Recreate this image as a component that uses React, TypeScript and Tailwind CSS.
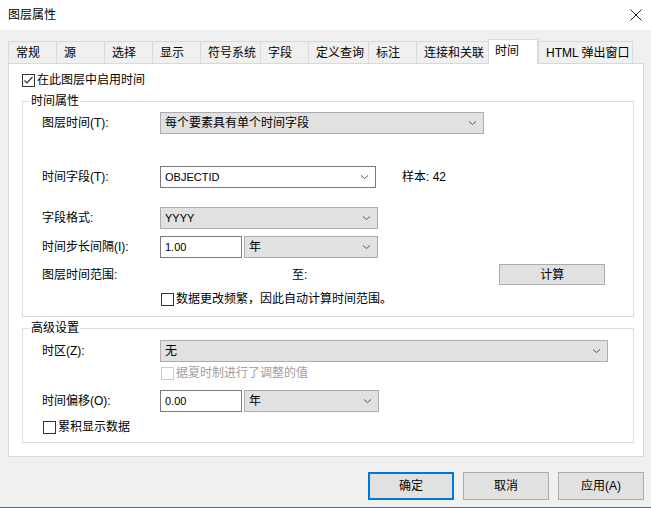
import React from "react";

const FONT = "font-['Liberation_Sans','Noto_Sans_CJK_SC',sans-serif]";

function Chevron() {
  return (
    <svg width="9" height="6" viewBox="0 0 9 6" className="shrink-0">
      <path d="M1 1.5 L4.5 4.5 L8 1.5" fill="none" stroke="#555" strokeWidth="1" />
    </svg>
  );
}

function Select({ value, w, white, small }: { value: string; w: string; white?: boolean; small?: boolean }) {
  return (
    <div
      className={`${w} h-[22px] flex items-center justify-between pl-[4px] pr-[6px] border ${
        white ? "bg-white border-[#7a7a7a]" : "bg-[#e1e1e1] border-[#adadad]"
      }`}
    >
      <span className={small ? "text-[11px] leading-[14px]" : "text-[12px] leading-[16px]"}>{value}</span>
      <Chevron />
    </div>
  );
}

function Input({ value }: { value: string }) {
  return (
    <div className="w-[82px] h-[22px] flex items-center pl-[4px] bg-white border border-[#7a7a7a] text-[11px] leading-[14px]">
      {value}
    </div>
  );
}

function Checkbox({ checked, disabled }: { checked?: boolean; disabled?: boolean }) {
  return (
    <div
      className={`w-[13px] h-[13px] border bg-white flex items-center justify-center shrink-0 ${
        disabled ? "border-[#cccccc]" : "border-[#333333]"
      }`}
    >
      {checked && (
        <svg width="11" height="11" viewBox="0 0 11 11">
          <path d="M1.5 5.5 L4 8 L9.5 2" fill="none" stroke="#333" strokeWidth="1.2" />
        </svg>
      )}
    </div>
  );
}

function Tab({ label, w, selected, last }: { label: string; w: string; selected?: boolean; last?: boolean }) {
  if (selected) {
    return (
      <div
        className={`${w} h-[25px] -mb-[1px] relative z-10 bg-white border-t border-l border-r border-[#d9d9d9] flex items-start pl-[6px] pt-[3px] text-[12px] leading-[16px]`}
      >
        {label}
      </div>
    );
  }
  return (
    <div
      className={`${w} h-[22px] bg-[#f0f0f0] border-t border-l ${last ? "border-r" : ""} border-[#d9d9d9] flex items-center pl-[7px] text-[12px] leading-[16px]`}
    >
      {label}
    </div>
  );
}

function Label({ children }: { children: React.ReactNode }) {
  return <div className="w-[118px] shrink-0 text-[12px] leading-[16px]">{children}</div>;
}

function Group({ title, h, children, className }: { title: string; h: string; children: React.ReactNode; className?: string }) {
  return (
    <div className={`relative ${h} border border-[#dcdcdc] ${className ?? ""}`}>
      <div className="absolute left-[7px] -top-[9px] bg-white px-[1px] text-[12px] leading-[16px]">{title}</div>
      {children}
    </div>
  );
}

function Button({ label, def }: { label: string; def?: boolean }) {
  return (
    <div
      className={`w-[86px] h-[28px] flex items-center justify-center bg-[#e1e1e1] text-[12px] leading-[16px] ${
        def ? "border-2 border-[#0078d7]" : "border border-[#adadad]"
      }`}
    >
      {label}
    </div>
  );
}

export default function App() {
  return (
    <div className={`w-[651px] h-[508px] bg-[#f0f0f0] flex flex-col text-[#000] ${FONT}`}>
      {/* Title bar */}
      <div className="h-[30px] bg-white flex items-center justify-between pl-[8px] pr-[9px] shrink-0">
        <span className="text-[12px] leading-[16px]">图层属性</span>
        <svg width="12" height="12" viewBox="0 0 12 12">
          <path d="M0.5 0.5 L11.5 11.5 M11.5 0.5 L0.5 11.5" stroke="#222" strokeWidth="1" />
        </svg>
      </div>

      <div className="px-[8px] pt-[9px] shrink-0">
        {/* Tabs */}
        <div className="h-[24px] flex items-end">
          <Tab label="常规" w="w-[48px]" />
          <Tab label="源" w="w-[48px]" />
          <Tab label="选择" w="w-[48px]" />
          <Tab label="显示" w="w-[48px]" />
          <Tab label="符号系统" w="w-[60px]" />
          <Tab label="字段" w="w-[48px]" />
          <Tab label="定义查询" w="w-[60px]" />
          <Tab label="标注" w="w-[48px]" />
          <Tab label="连接和关联" w="w-[72px]" />
          <Tab label="时间" w="w-[50px]" selected />
          <Tab label="HTML 弹出窗口" w="w-[95px]" last />
        </div>

        {/* Panel */}
        <div className="w-[636px] h-[394px] bg-white border border-[#d9d9d9] pl-[13px] pt-[8px]">
          <div className="h-[16px] flex items-center gap-[2px]">
            <Checkbox checked />
            <span className="text-[12px] leading-[16px]">在此图层中启用时间</span>
          </div>

          <Group title="时间属性" h="h-[216px]" className="w-[612px] mt-[13px]">
            <div className="pl-[19px] pt-[10px] flex flex-col">
              <div className="h-[22px] flex items-center">
                <Label>图层时间(T):</Label>
                <Select value="每个要素具有单个时间字段" w="w-[324px]" />
              </div>
              <div className="h-[22px] mt-[32px] flex items-center">
                <Label>时间字段(T):</Label>
                <Select value="OBJECTID" w="w-[216px]" white small />
                <span className="ml-[26px] text-[12px] leading-[16px]">样本: 42</span>
              </div>
              <div className="h-[22px] mt-[19px] flex items-center">
                <Label>字段格式:</Label>
                <Select value="YYYY" w="w-[218px]" small />
              </div>
              <div className="h-[22px] mt-[7px] flex items-center">
                <Label>时间步长间隔(I):</Label>
                <Input value="1.00" />
                <div className="ml-[2px]">
                  <Select value="年" w="w-[134px]" />
                </div>
              </div>
              <div className="h-[21px] mt-[6px] flex items-center">
                <Label>图层时间范围:</Label>
                <span className="ml-[132px] text-[12px] leading-[16px]">至:</span>
                <div className="ml-[192px] w-[106px] h-[21px] flex items-center justify-center bg-[#e1e1e1] border border-[#adadad] text-[12px] leading-[16px]">
                  计算
                </div>
              </div>
              <div className="h-[16px] mt-[6px] flex items-center pl-[119px] gap-[2px]">
                <Checkbox />
                <span className="text-[12px] leading-[16px]">数据更改频繁，因此自动计算时间范围。</span>
              </div>
            </div>
          </Group>

          <Group title="高级设置" h="h-[115px]" className="w-[612px] mt-[11px]">
            <div className="pl-[19px] pt-[11px] flex flex-col">
              <div className="h-[22px] flex items-center">
                <Label>时区(Z):</Label>
                <Select value="无" w="w-[448px]" />
              </div>
              <div className="h-[16px] mt-[3px] flex items-center pl-[119px] gap-[2px]">
                <Checkbox disabled />
                <span className="text-[12px] leading-[16px] text-[#a0a0a0]">据夏时制进行了调整的值</span>
              </div>
              <div className="h-[22px] mt-[9px] flex items-center">
                <Label>时间偏移(O):</Label>
                <Input value="0.00" />
                <div className="ml-[2px]">
                  <Select value="年" w="w-[135px]" />
                </div>
              </div>
              <div className="h-[16px] mt-[7px] flex items-center pl-[1px] gap-[2px]">
                <Checkbox />
                <span className="text-[12px] leading-[16px]">累积显示数据</span>
              </div>
            </div>
          </Group>
        </div>
      </div>

      {/* Buttons */}
      <div className="mt-[15px] flex justify-end gap-[9px] pr-[7px] shrink-0">
        <Button label="确定" def />
        <Button label="取消" />
        <Button label="应用(A)" />
      </div>
      <div className="flex-1" />
      <div className="h-[1px] bg-[#2b79d0] shrink-0" />
    </div>
  );
}
